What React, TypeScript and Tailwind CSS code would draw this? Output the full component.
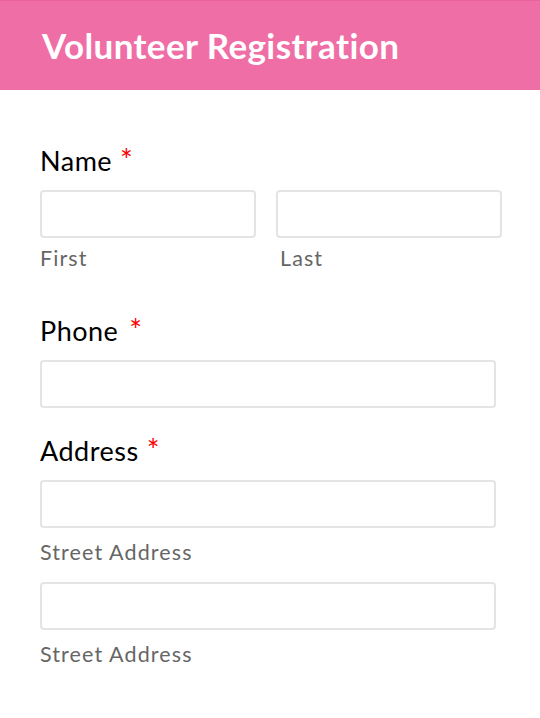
import React from 'react';

const font = { fontFamily: 'Lato, "Noto Sans", sans-serif' };

const Req = ({ gap = 'ml-[8px]' }: { gap?: string }) => (
  <span className={`${gap} text-[30px] leading-[0px] text-[#ff0000]`}>*</span>
);

const Box = ({ width }: { width: string }) => (
  <input
    type="text"
    className={`${width} block h-[48px] rounded-[4px] border-2 border-[#e4e4e4] bg-white outline-none`}
  />
);

const Hint = ({ children, mt, pl = '' }: { children: React.ReactNode; mt: string; pl?: string }) => (
  <div className={`${mt} ${pl} text-[21.5px] leading-[22px] tracking-[1.1px] text-[#666666]`}>{children}</div>
);

export default function App() {
  return (
    <div className="min-h-screen w-full bg-white [font-variant-ligatures:none]" style={font}>
      {/* Header */}
      <div className="flex h-[90px] items-center border-t border-[#e9629c] bg-[#f06ea6] px-[42px]">
        <h1 className="text-[35px] font-bold leading-[35px] tracking-[0.4px] text-white">
          Volunteer Registration
        </h1>
      </div>

      <form className="pl-[40px] pt-[57px]">
        {/* Name */}
        <label className="block h-[27px] text-[27px] leading-[27px] tracking-[0.5px] text-black">
          Name<Req />
        </label>
        <div className="mt-[16px] flex gap-[20px]">
          <div>
            <Box width="w-[216px]" />
            <Hint mt="mt-[9px]">First</Hint>
          </div>
          <div>
            <Box width="w-[226px]" />
            <Hint mt="mt-[9px]" pl="pl-[4px]">Last</Hint>
          </div>
        </div>

        {/* Phone */}
        <label className="mt-[48px] block h-[27px] text-[27px] leading-[27px] tracking-[0.5px] text-black">
          Phone<Req gap="ml-[11px]" />
        </label>
        <div className="mt-[16px]">
          <Box width="w-[456px]" />
        </div>

        {/* Address */}
        <label className="mt-[29px] block h-[27px] text-[27px] leading-[27px] tracking-[0.5px] text-black">
          Address<Req />
        </label>
        <div className="mt-[16px]">
          <Box width="w-[456px]" />
          <Hint mt="mt-[13px]">Street Address</Hint>
        </div>
        <div className="mt-[19px]">
          <Box width="w-[456px]" />
          <Hint mt="mt-[13px]">Street Address</Hint>
        </div>
      </form>
    </div>
  );
}
